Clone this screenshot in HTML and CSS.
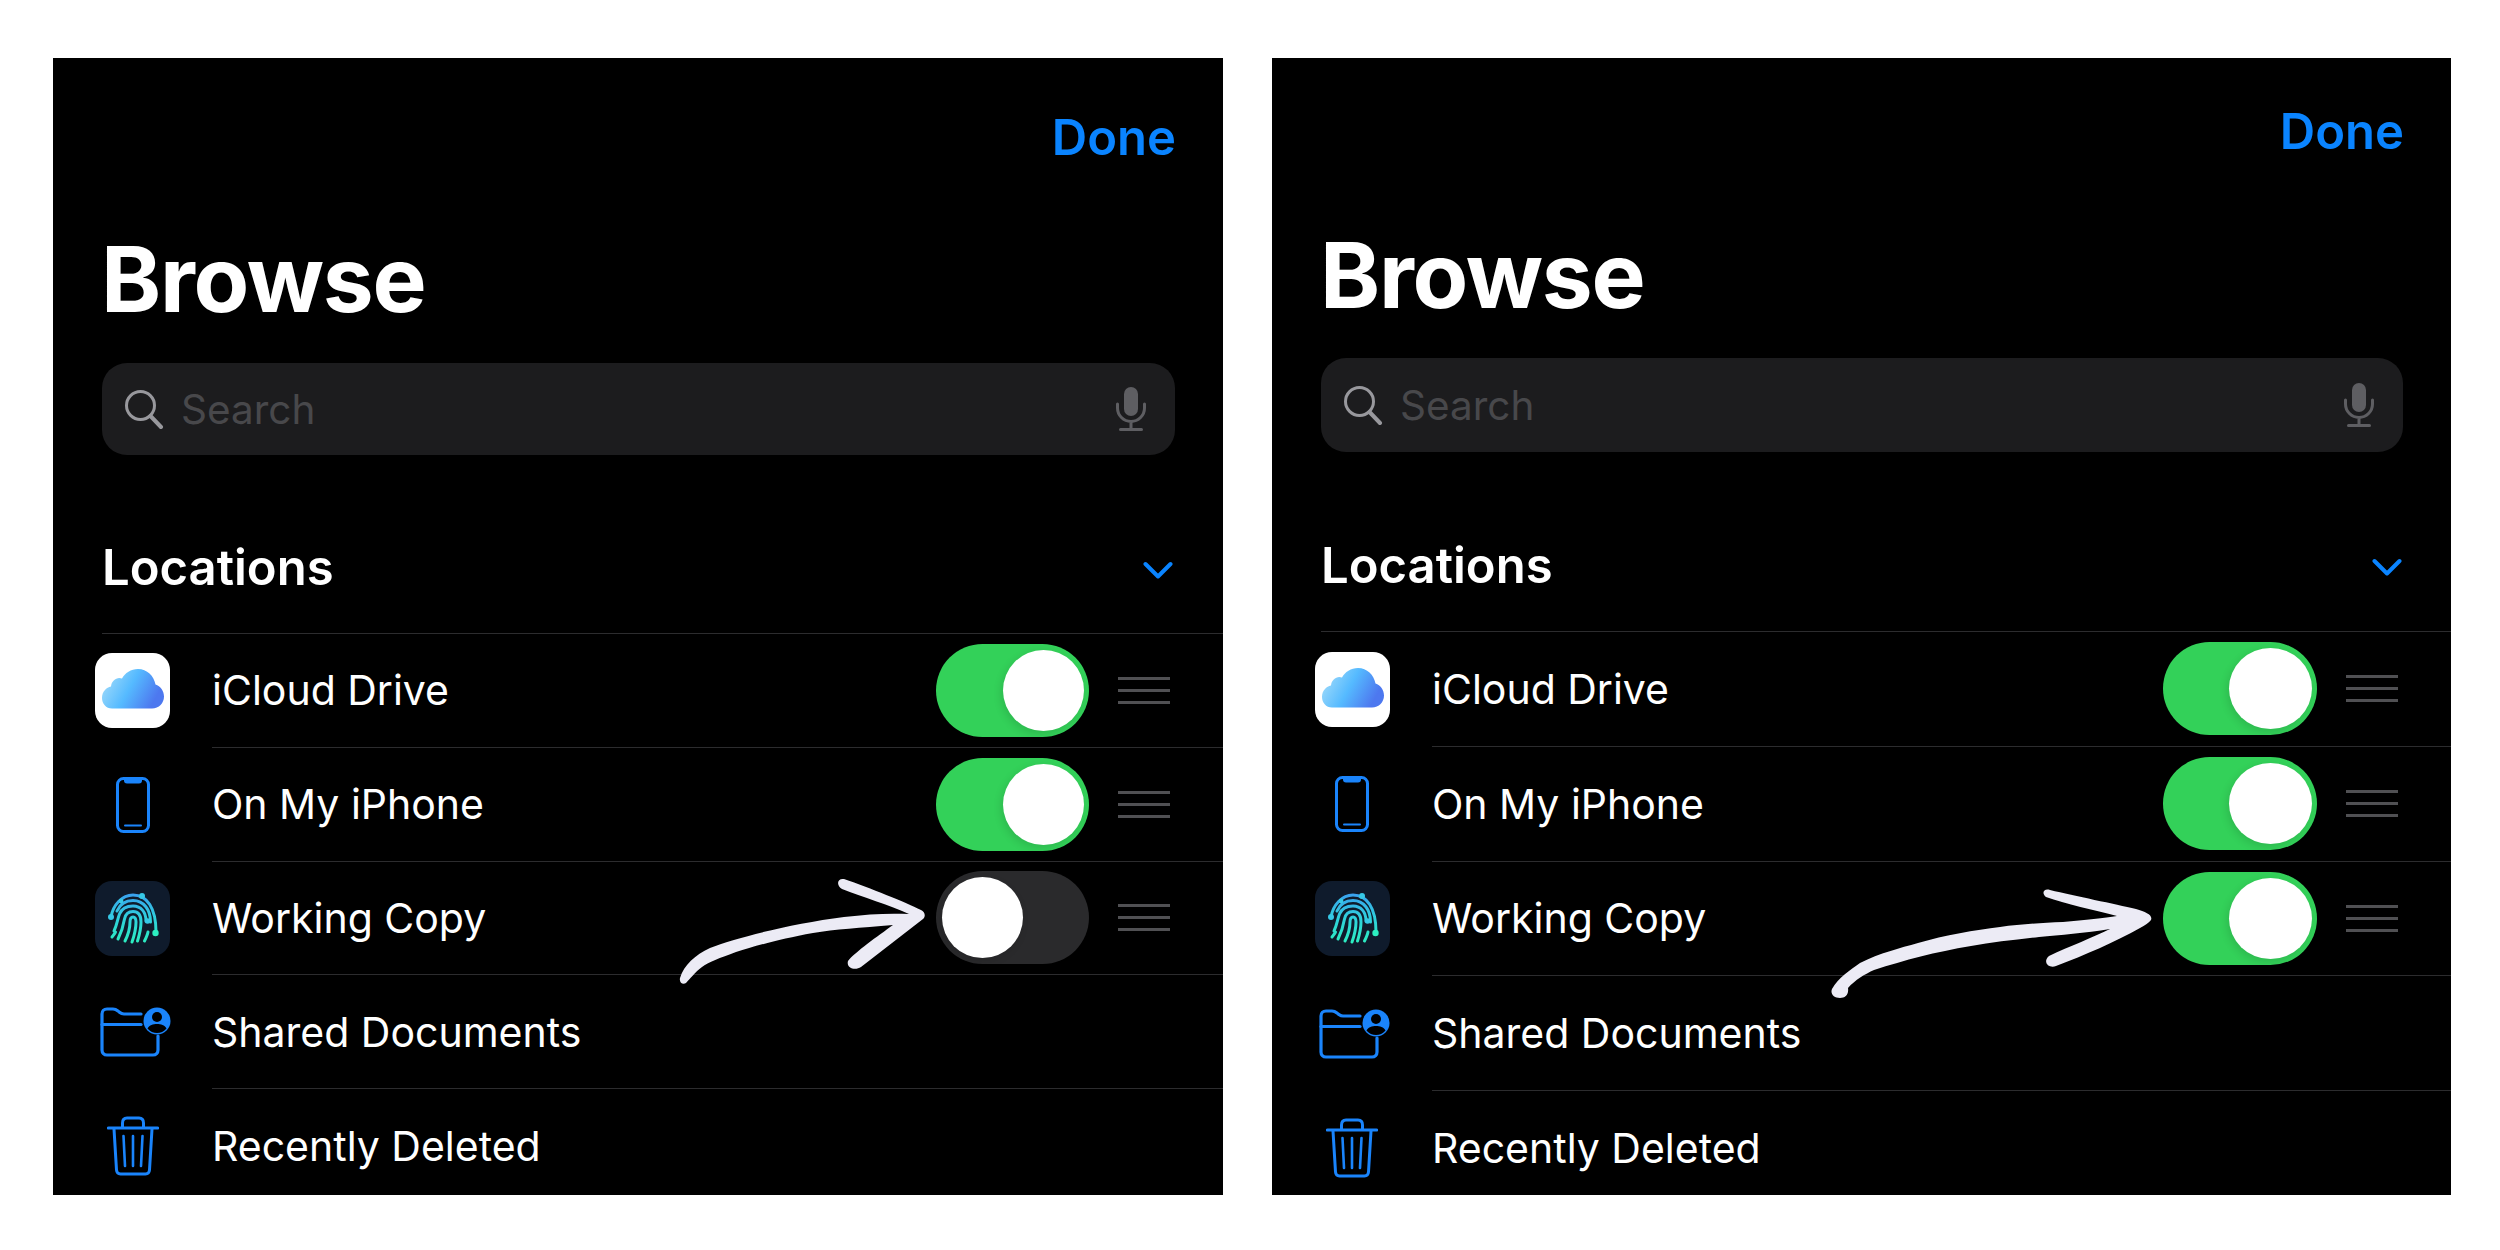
FILE: index.html
```html
<!DOCTYPE html>
<html lang="en">
<head>
    <meta charset="UTF-8">
    <title>Browse</title>
    <link rel="stylesheet" href="styles.css">
</head>
<body>
    <svg class="defs" aria-hidden="true">
        <defs>
            <linearGradient id="cloudFill" x1="0" y1="0" x2="1" y2="0.35">
                <stop offset="0" stop-color="#b0e2f9"/>
                <stop offset="0.55" stop-color="#55baff"/>
                <stop offset="1" stop-color="#4d78ef"/>
            </linearGradient>
            <linearGradient id="printStroke" gradientUnits="userSpaceOnUse" x1="0" y1="12" x2="0" y2="62">
                <stop offset="0" stop-color="#3a9ff0"/>
                <stop offset="0.5" stop-color="#2fd0dc"/>
                <stop offset="1" stop-color="#2ceec0"/>
            </linearGradient>
        </defs>
        <symbol id="i-search" viewBox="0 0 40 40">
            <circle cx="16.5" cy="16.5" r="14" fill="none" stroke="currentColor" stroke-width="3"/>
            <path d="M26.5 27l10.5 11" fill="none" stroke="currentColor" stroke-width="4" stroke-linecap="round"/>
        </symbol>
        <symbol id="i-mic" viewBox="0 0 30 44">
            <rect x="8" y="0" width="14" height="29" rx="7" fill="currentColor"/>
            <path d="M1.5 17v4a13.5 13.5 0 0 0 27 0v-4M15 35v7M4.500 42.500h21" fill="none" stroke="currentColor" stroke-width="3" stroke-linecap="round"/>
        </symbol>
        <symbol id="i-chevron" viewBox="0 0 30 18">
            <path d="M2.500 3l12.500 12.500 12.500-12.500" fill="none" stroke="currentColor" stroke-width="4" stroke-linecap="round" stroke-linejoin="round"/>
        </symbol>
        <symbol id="i-cloud" viewBox="0 0 75 75">
            <rect width="75" height="75" rx="17" fill="#fff"/>
            <path d="M17 55.500C11 55.500 7 50.500 7 45C7 38.500 11.500 34.500 16 33.500C16.500 27.500 22 23.500 27 25.500C30 20 36 16 43 16C52 16 59 23 60.500 31.500C65.500 33 69 38 69 43.500C69 50 64 55.500 57 55.500Z" fill="url(#cloudFill)"/>
        </symbol>
        <symbol id="i-phone" viewBox="0 0 34 56">
            <rect x="1.500" y="1.500" width="31" height="53" rx="6" fill="none" stroke="currentColor" stroke-width="3"/>
            <path d="M8 2h18v1.500a3 3 0 0 1-3 3H11a3 3 0 0 1-3-3z" fill="currentColor"/>
            <path d="M9 48.500h16" stroke="currentColor" stroke-width="2" stroke-linecap="round"/>
        </symbol>
        <symbol id="i-print" viewBox="0 0 75 75">
            <rect width="75" height="75" rx="17" fill="#0f1b2c"/>
            <g fill="none" stroke="url(#printStroke)" stroke-width="3" stroke-linecap="round">
                <path d="M16 36C18 24 27 14 38 14C52 14 61 27 61 51"/>
                <path d="M22 30C25 23 31 19.500 38 19.500C49 19.500 55.500 29 55.500 41"/>
                <path d="M19 50C22 44 22.500 38 24.500 33C27 27 32 25 38 25C46 25 51 31 51 40"/>
                <path d="M23 58C27 50 28.500 44 29.500 38C30.500 33 34 30.500 38 30.500C43 30.500 46 34 46 41C46 47 45 52 42.500 60"/>
                <path d="M30 60C33 54 35 47 35 41C35 37 36 36 38 36C40.500 36 41 38 41 41C41 48 39.500 54 37 61"/>
                <path d="M53 51C52.500 54 51 57 49.500 60"/>
                <path d="M17 56C18.500 54 19.500 53 20.500 51"/>
            </g>
            <g fill="#36c8e6">
                <circle cx="47" cy="15" r="3"/>
                <circle cx="26" cy="20" r="2.400"/>
                <circle cx="16" cy="36" r="3"/>
                <circle cx="52.500" cy="40" r="2.800"/>
                <circle cx="60.500" cy="52" r="3.200" fill="#2ceec0"/>
            </g>
        </symbol>
        <symbol id="i-folder" viewBox="0 0 71 50">
            <path d="M41 7H24C21 7 20 5.500 18 4C16.500 2.800 15 2 13 2H7C4 2 2 4 2 7V43C2 46 4 48 7 48H53C56 48 58 46 58 43V29" fill="none" stroke="currentColor" stroke-width="3.200" stroke-linecap="round"/>
            <path d="M2 17.500H41" fill="none" stroke="currentColor" stroke-width="3.200" stroke-linecap="round"/>
            <circle cx="57" cy="14" r="13.500" fill="currentColor"/>
            <circle cx="57" cy="10" r="5" fill="#000"/>
            <path d="M47.500 21.500C49.500 18 53 17 57 17C61 17 64.500 18 66.500 21.500C64 24.800 60.500 26 57 26C53.500 26 50 24.800 47.500 21.500Z" fill="#000"/>
        </symbol>
        <symbol id="i-trash" viewBox="0 0 52 60">
            <g fill="none" stroke="currentColor" stroke-linecap="round" stroke-linejoin="round">
                <path d="M15.500 11V7C15.500 3.500 17 2 20 2H32C35 2 36.500 3.500 36.500 7V11" stroke-width="3"/>
                <path d="M1.500 12H50.500" stroke-width="3.200"/>
                <path d="M7 13L9.500 54C9.700 56.500 11 58 13.500 58H38.500C41 58 42.300 56.500 42.500 54L45 13" stroke-width="3"/>
                <path d="M16.500 20L18 50M26 20V50M35.500 20L34 50" stroke-width="2.600"/>
            </g>
        </symbol>
    </svg>

    <section class="panel panel-before">
        <div class="done">Done</div>
        <h1 class="title">Browse</h1>
        <div class="search">
            <svg class="search-icon"><use href="#i-search"/></svg>
            <span class="search-text">Search</span>
            <svg class="mic"><use href="#i-mic"/></svg>
        </div>
        <div class="section-head">
            <h2>Locations</h2>
            <svg class="chevron"><use href="#i-chevron"/></svg>
        </div>
        <ul class="rows">
            <li class="row">
                <div class="row-icon"><svg class="icon-app"><use href="#i-cloud"/></svg></div>
                <div class="row-main">
                    <span class="row-label">iCloud Drive</span>
                    <span class="toggle on"><span class="knob"></span></span>
                    <span class="grip"><i></i><i></i><i></i></span>
                </div>
            </li>
            <li class="row">
                <div class="row-icon"><svg class="icon-phone"><use href="#i-phone"/></svg></div>
                <div class="row-main">
                    <span class="row-label">On My iPhone</span>
                    <span class="toggle on"><span class="knob"></span></span>
                    <span class="grip"><i></i><i></i><i></i></span>
                </div>
            </li>
            <li class="row">
                <div class="row-icon"><svg class="icon-app"><use href="#i-print"/></svg></div>
                <div class="row-main">
                    <span class="row-label">Working Copy</span>
                    <span class="toggle"><span class="knob"></span></span>
                    <span class="grip"><i></i><i></i><i></i></span>
                </div>
            </li>
            <li class="row">
                <div class="row-icon"><svg class="icon-folder"><use href="#i-folder"/></svg></div>
                <div class="row-main">
                    <span class="row-label">Shared Documents</span>
                </div>
            </li>
            <li class="row">
                <div class="row-icon"><svg class="icon-trash"><use href="#i-trash"/></svg></div>
                <div class="row-main">
                    <span class="row-label">Recently Deleted</span>
                </div>
            </li>
        </ul>
        <!-- hand drawn arrow, viewBox is in page coordinates -->
        <svg class="arrow" viewBox="53 58 1170 1137">
            <path d="M680 978C684 965 695 955 710 948C735 938 790 924 844 917C868 914 890 913 909 914C890 905 862 897 842 889C836 885 837 878 844 879C870 888 905 902 921 910C925 912 926 916 923 919L861 967C855 971 846 968 848 961C855 952 878 936 893 925C860 928 835 929 813 933C780 939 755 946 736 952C720 958 708 962 702 967C695 972 690 979 686 983C683 985 679 983 680 978Z"/>
        </svg>
    </section>

    <section class="panel panel-after">
        <div class="done">Done</div>
        <h1 class="title">Browse</h1>
        <div class="search">
            <svg class="search-icon"><use href="#i-search"/></svg>
            <span class="search-text">Search</span>
            <svg class="mic"><use href="#i-mic"/></svg>
        </div>
        <div class="section-head">
            <h2>Locations</h2>
            <svg class="chevron"><use href="#i-chevron"/></svg>
        </div>
        <ul class="rows">
            <li class="row">
                <div class="row-icon"><svg class="icon-app"><use href="#i-cloud"/></svg></div>
                <div class="row-main">
                    <span class="row-label">iCloud Drive</span>
                    <span class="toggle on"><span class="knob"></span></span>
                    <span class="grip"><i></i><i></i><i></i></span>
                </div>
            </li>
            <li class="row">
                <div class="row-icon"><svg class="icon-phone"><use href="#i-phone"/></svg></div>
                <div class="row-main">
                    <span class="row-label">On My iPhone</span>
                    <span class="toggle on"><span class="knob"></span></span>
                    <span class="grip"><i></i><i></i><i></i></span>
                </div>
            </li>
            <li class="row">
                <div class="row-icon"><svg class="icon-app"><use href="#i-print"/></svg></div>
                <div class="row-main">
                    <span class="row-label">Working Copy</span>
                    <span class="toggle on"><span class="knob"></span></span>
                    <span class="grip"><i></i><i></i><i></i></span>
                </div>
            </li>
            <li class="row">
                <div class="row-icon"><svg class="icon-folder"><use href="#i-folder"/></svg></div>
                <div class="row-main">
                    <span class="row-label">Shared Documents</span>
                </div>
            </li>
            <li class="row">
                <div class="row-icon"><svg class="icon-trash"><use href="#i-trash"/></svg></div>
                <div class="row-main">
                    <span class="row-label">Recently Deleted</span>
                </div>
            </li>
        </ul>
        <svg class="arrow" viewBox="1272 58 1179 1137">
            <path d="M1832 989C1838 978 1850 970 1860 963C1880 953 1900 948 1918 943C1945 935 1975 930 2000 927C2020 924 2040 923 2063 922C2085 920 2105 918 2117 916C2095 910 2065 904 2046 897C2041 893 2044 888 2050 890C2075 896 2115 904 2136 909C2146 912 2153 915 2151 920C2149 923 2145 925 2140 928C2115 942 2085 955 2056 966C2049 969 2042 962 2049 956C2070 946 2092 938 2110 929C2085 933 2060 935 2039 937C2015 940 1992 942 1971 946C1935 952 1905 960 1874 970C1865 974 1855 980 1848 988C1849 995 1845 998 1840 998C1834 998 1830 994 1832 989Z"/>
        </svg>
    </section>
</body>
</html>
```

FILE: styles.css
```css
* {
    box-sizing: border-box;
}
body {
    margin: 0;
    padding: 58px 0 0 53px;
    display: flex;
    gap: 49px;
    background-color: #fff;
    font-family: Inter, "Liberation Sans", sans-serif;
    color: #fff;
}
.defs {
    position: absolute;
    width: 0;
    height: 0;
}

.panel {
    position: relative;
    width: 1170px;
    height: 1137px;
    padding-top: 52px;
    background-color: #000;
    overflow: hidden;
}
.panel-after {
    width: 1179px;
    padding-top: 46px;
}

.done {
    height: 56px;
    padding-right: 47px;
    text-align: right;
    font-size: 49px;
    line-height: 56px;
    font-weight: 600;
    color: #0a84ff;
}
.title {
    height: 100px;
    margin: 63px 0 0 48px;
    font-size: 91px;
    line-height: 100px;
    font-weight: 700;
    letter-spacing: -1.3px;
}
.panel-after .title {
    margin-top: 65px;
}

.search {
    display: flex;
    align-items: center;
    height: 92px;
    margin: 34px 48px 0 49px;
    padding: 0 29px 0 22px;
    border-radius: 25px;
    background-color: #1c1c1e;
    color: #98989d;
}
.panel-after .search {
    height: 94px;
    margin-top: 33px;
}
.search-icon {
    width: 40px;
    height: 40px;
    flex: none;
}
.search-text {
    margin-left: 17px;
    font-size: 40.5px;
    color: #48484b;
}
.mic {
    width: 30px;
    height: 44px;
    margin-left: auto;
    color: #5e5e62;
}

.section-head {
    display: flex;
    align-items: center;
    justify-content: space-between;
    height: 179px;
    margin-left: 49px;
    padding: 47px 50px 0 0;
    border-bottom: 1px solid #2c2c2e;
}
.panel-after .section-head {
    height: 180px;
    padding-right: 49px;
}
.section-head h2 {
    margin: 0;
    font-size: 49px;
    font-weight: 600;
}
.chevron {
    width: 30px;
    height: 18px;
    margin-top: 4px;
    color: #0a84ff;
}

.rows {
    margin: 0;
    padding: 0;
    list-style: none;
}
.row {
    display: flex;
    height: 113.75px;
}
.panel-after .row {
    height: 114.75px;
}
.row-icon {
    display: flex;
    align-items: center;
    justify-content: center;
    width: 159px;
    flex: none;
    color: #1a84fb;
}
.panel-after .row-icon {
    width: 160px;
}
.icon-app {
    width: 75px;
    height: 75px;
}
.icon-phone {
    width: 34px;
    height: 56px;
}
.icon-folder {
    width: 71px;
    height: 50px;
    margin-left: 5px;
}
.icon-trash {
    width: 52px;
    height: 60px;
}
.row-main {
    display: flex;
    align-items: center;
    flex: 1;
    padding-right: 53px;
    border-bottom: 1px solid #2c2c2e;
}
.row:last-child .row-main {
    border-bottom: none;
}
.row-label {
    margin-right: auto;
    font-size: 41px;
}

.toggle {
    display: flex;
    align-items: center;
    justify-content: flex-start;
    width: 153px;
    height: 93px;
    padding: 0 5.5px;
    border-radius: 47px;
    background-color: #2a2a2c;
}
.toggle.on {
    justify-content: flex-end;
    background-color: #33d159;
}
.knob {
    width: 81px;
    height: 81px;
    border-radius: 50%;
    background-color: #fff;
    box-shadow: -2px 3px 8px rgba(0, 0, 0, 0.12);
}
.panel-after .toggle {
    width: 154px;
}
.panel-after .knob {
    width: 83px;
}
.grip {
    display: flex;
    flex-direction: column;
    gap: 9px;
    width: 52px;
    margin-left: 29px;
}
.grip i {
    height: 3px;
    background-color: #505053;
}

.arrow {
    position: absolute;
    top: 0;
    left: 0;
    width: 100%;
    height: 100%;
    fill: #ecebf5;
}
```
